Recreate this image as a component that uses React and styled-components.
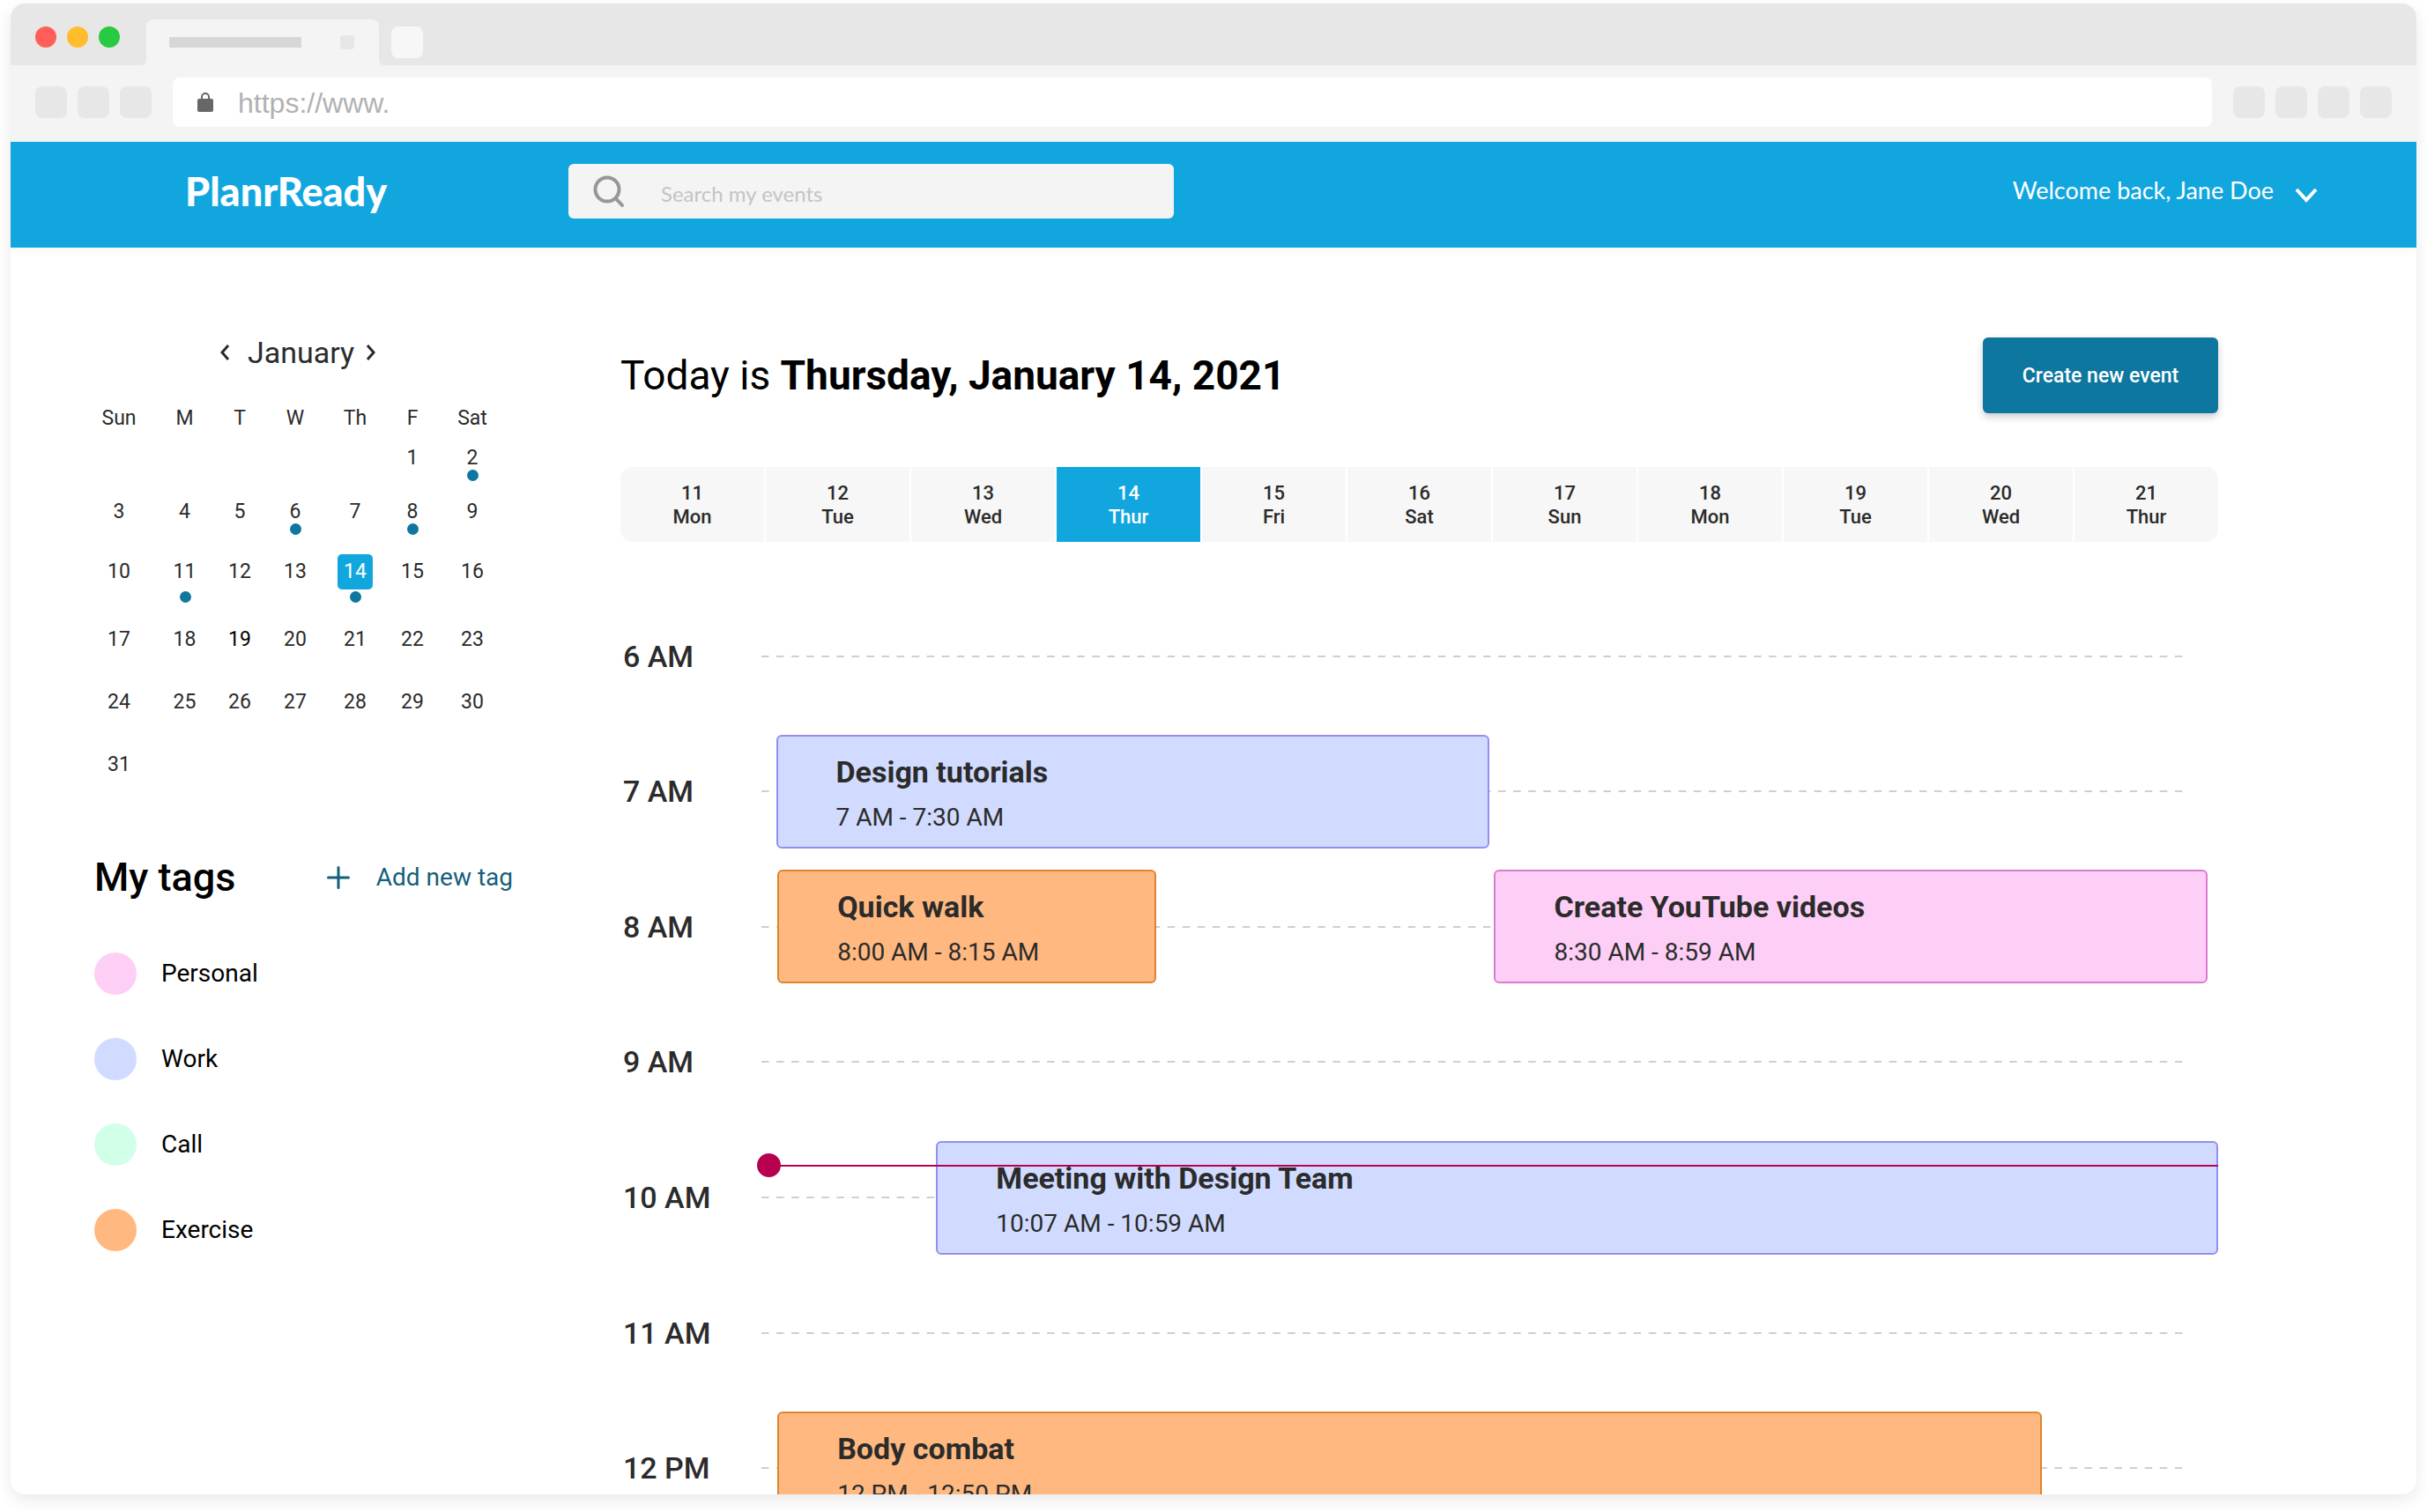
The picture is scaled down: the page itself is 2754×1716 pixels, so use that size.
import React from "react";
import styled, { createGlobalStyle } from "styled-components";

const colors = {
  brand: "#12a6df",
  brandDark: "#0e779f",
  link: "#155f7b",
  text: "#2b2b2b",
  now: "#b80050",
};

const tagColors = {
  personal: { fill: "#fecff6", edge: "#dc7bce" },
  work: { fill: "#d1dbff", edge: "#928ff2" },
  call: { fill: "#d1ffe8", edge: "#6fd6a3" },
  exercise: { fill: "#ffb980", edge: "#e0832f" },
};

const GlobalStyle = createGlobalStyle`
  *, *::before, *::after { box-sizing: border-box; }
  body { margin: 0; background: #fff; font-family: Roboto, "Liberation Sans", sans-serif; color: ${colors.text}; }
  button, input { font: inherit; color: inherit; }
  button { border: 0; padding: 0; background: none; cursor: pointer; }
  h1, h2, h3, p, ul { margin: 0; padding: 0; }
`;

const Window = styled.div`
  display: flex;
  flex-direction: column;
  height: calc(100vh - 24px);
  margin: 4px 12px 20px;
  border-radius: 16px;
  overflow: hidden;
  background: #fff;
  box-shadow: 0 6px 18px rgba(0, 0, 0, 0.09);
`;

const TitleBar = styled.div`
  flex: none;
  display: flex;
  align-items: flex-end;
  height: 70px;
  padding-left: 28px;
  background: #e7e7e7;
`;

const Lights = styled.div`
  display: flex;
  gap: 12px;
  padding-bottom: 20px;
  margin-right: 30px;
`;

const Light = styled.span`
  width: 24px;
  height: 24px;
  border-radius: 50%;
  background: ${(p) => p.$color};
`;

const Tab = styled.div`
  position: relative;
  display: flex;
  align-items: center;
  justify-content: space-between;
  width: 264px;
  height: 52px;
  padding: 0 28px 0 26px;
  border-radius: 8px 8px 0 0;
  background: #f4f4f4;

  &::before,
  &::after {
    content: "";
    position: absolute;
    bottom: 0;
    width: 6px;
    height: 6px;
  }
  &::before {
    left: -6px;
    background: radial-gradient(circle at 0 0, #e7e7e7 6px, #f4f4f4 6px);
  }
  &::after {
    right: -6px;
    background: radial-gradient(circle at 100% 0, #e7e7e7 6px, #f4f4f4 6px);
  }
`;

const TabTitle = styled.span`
  width: 150px;
  height: 12px;
  background: #d7d7d7;
`;

const TabClose = styled.span`
  width: 16px;
  height: 16px;
  border-radius: 4px;
  background: #e7e7e7;
`;

const Chip = styled.span`
  flex: none;
  width: 36px;
  height: 36px;
  border-radius: 8px;
  background: ${(p) => p.$color || "#e7e7e7"};
`;

const NewTab = styled.div`
  display: flex;
  padding: 0 0 8px 14px;
`;

const Toolbar = styled.div`
  flex: none;
  display: flex;
  align-items: center;
  gap: 24px;
  padding: 14px 28px 17px;
  background: #f4f4f4;
`;

const ChipGroup = styled.div`
  display: flex;
  gap: 12px;
`;

const Address = styled.label`
  flex: 1;
  display: flex;
  align-items: center;
  gap: 28px;
  height: 56px;
  padding: 0 28px;
  border-radius: 8px;
  background: #fff;
`;

const AddressInput = styled.input`
  flex: 1;
  min-width: 0;
  border: 0;
  padding: 2px 0 0;
  outline: 0;
  background: none;
  font-family: "Liberation Sans", Arial, sans-serif;
  font-size: 32px;
  line-height: 40px;
  color: #b1b1b1;
`;

const Header = styled.header`
  flex: none;
  display: flex;
  align-items: center;
  height: 120px;
  padding: 0 112px 0 198px;
  background: ${colors.brand};
  box-shadow: 0 4px 12px rgba(0, 0, 0, 0.03);
  color: #fff;
  font-family: Lato, sans-serif;
`;

const Logo = styled.a`
  width: 435px;
  padding-bottom: 8px;
  font-size: 45px;
  line-height: 56px;
  font-weight: 900;
  color: inherit;
  text-decoration: none;
`;

const Search = styled.label`
  display: flex;
  align-items: center;
  gap: 40px;
  width: 687px;
  height: 62px;
  margin-bottom: 8px;
  padding: 0 28px;
  border-radius: 6px;
  background: #f4f4f4;
`;

const SearchInput = styled.input`
  flex: 1;
  min-width: 0;
  border: 0;
  padding: 6px 0 0;
  outline: 0;
  background: none;
  font-size: 24px;
  line-height: 28px;

  &::placeholder {
    color: #c4c4c4;
    opacity: 1;
  }
`;

const Account = styled.button`
  display: flex;
  align-items: center;
  gap: 24px;
  margin-left: auto;
  font-size: 27px;
  line-height: 32px;
  padding-bottom: 10px;

  svg {
    margin-top: 10px;
  }
`;

const Page = styled.div`
  flex: 1;
  min-height: 0;
  display: flex;
  gap: 122px;
  padding: 0 225px 0 95px;
  overflow: hidden;
`;

const Sidebar = styled.aside`
  flex: none;
  width: 475px;
  padding-top: 99px;
`;

const MonthNav = styled.div`
  display: flex;
  align-items: center;
  gap: 12px;
  height: 40px;
  margin-bottom: 35px;
  padding-left: 141px;
`;

const MonthName = styled.h2`
  padding-left: 7px;
  font-size: 34px;
  line-height: 40px;
  font-weight: 400;
`;

const MonthButton = styled.button`
  display: flex;
  align-items: center;
  width: 14px;
  height: 40px;
`;

const MonthTable = styled.table`
  table-layout: fixed;
  width: 477px;
  margin-left: -12px;
  border-collapse: collapse;
  font-size: 23px;
  line-height: 40px;
  text-align: center;

  th,
  td {
    padding: 0;
    font-weight: 400;
    vertical-align: top;
    white-space: nowrap;
  }
`;

const WeekRow = styled.tr`
  height: ${(p) => p.$height}px;
`;

const DayButton = styled.button`
  position: relative;
  display: block;
  width: 40px;
  height: 40px;
  margin: 0 auto;
  border-radius: 5px;
  background: ${(p) => (p.$today ? colors.brand : "none")};
  color: ${(p) => (p.$today ? "#fff" : p.$strong ? "#000" : "inherit")};

  &::after {
    content: "";
    display: ${(p) => (p.$dot ? "block" : "none")};
    position: absolute;
    left: 14px;
    top: ${(p) => p.$dot}px;
    width: 13px;
    height: 13px;
    border-radius: 50%;
    background: ${colors.brandDark};
  }
`;

const TagsHead = styled.div`
  display: flex;
  align-items: center;
  justify-content: space-between;
  margin: 86px 0 63px;
`;

const TagsTitle = styled.h2`
  font-size: 45px;
  line-height: 44px;
  font-weight: 500;
  color: #000;
`;

const AddTag = styled.button`
  display: flex;
  align-items: center;
  gap: 30px;
  font-size: 28px;
  line-height: 32px;
  color: ${colors.link};
`;

const TagList = styled.ul`
  display: flex;
  flex-direction: column;
  gap: 49px;
  list-style: none;
`;

const TagItem = styled.li`
  display: flex;
  align-items: center;
  gap: 28px;
  font-size: 28px;
  line-height: 48px;
  color: #000;

  &::before {
    content: "";
    width: 48px;
    height: 48px;
    border-radius: 50%;
    background: ${(p) => p.$color};
  }
`;

const Content = styled.main`
  flex: 1;
  min-width: 0;
  padding-top: 102px;
`;

const ContentHead = styled.div`
  display: flex;
  align-items: center;
  justify-content: space-between;
  margin-bottom: 61px;
`;

const Today = styled.h1`
  font-size: 46px;
  line-height: 56px;
  font-weight: 400;
  color: #000;
`;

const CreateButton = styled.button`
  width: 267px;
  height: 86px;
  padding-top: 2px;
  border-radius: 6px;
  background: ${colors.brandDark};
  box-shadow: 0 4px 8px rgba(0, 0, 0, 0.2);
  color: #fff;
  font-size: 23px;
  line-height: 28px;
  font-weight: 500;
`;

const DayStrip = styled.div`
  display: grid;
  grid-template-columns: repeat(11, 1fr);
  gap: 2px;
  border-radius: 14px;
  overflow: hidden;
`;

const StripDay = styled.button`
  display: flex;
  flex-direction: column;
  align-items: center;
  justify-content: center;
  height: 85px;
  background: ${(p) => (p.$active ? colors.brand : "#f7f7f7")};
  color: ${(p) => (p.$active ? "#fff" : colors.text)};
  font-size: 22px;
  line-height: 27px;
  font-weight: 500;
`;

const Timeline = styled.div`
  position: relative;
  display: grid;
  grid-auto-rows: 1fr;
  height: 1075px;
  margin-top: 53px;
`;

const HourRow = styled.section`
  display: flex;
  align-items: center;
`;

const HourLabel = styled.h3`
  flex: none;
  width: 160px;
  padding-left: 3px;
  font-size: 34px;
  line-height: 40px;
  font-weight: 500;
`;

const Track = styled.div`
  flex: 1;
  display: grid;
  align-items: center;

  > * {
    grid-area: 1 / 1;
  }
`;

const HourLine = styled.div`
  height: 2px;
  margin-right: 32px;
  background: linear-gradient(90deg, #cfcfcf 9px, transparent 9px) 0 0 / 17px 2px round;
`;

const EventCard = styled.article`
  height: 129px;
  margin-left: ${(p) => p.$start / 10}%;
  width: ${(p) => p.$span / 10}%;
  padding: 20px 66px;
  border: 2px solid ${(p) => tagColors[p.$tag].edge};
  border-radius: 6px;
  background: ${(p) => tagColors[p.$tag].fill};
`;

const EventTitle = styled.h3`
  margin-bottom: 12px;
  font-size: 34px;
  line-height: 40px;
  font-weight: 700;
  white-space: nowrap;
`;

const EventTime = styled.p`
  font-size: 28px;
  line-height: 40px;
`;

const NowMarker = styled.div`
  position: absolute;
  top: 641px;
  left: 155px;
  right: 0;
  display: flex;
  align-items: center;
  pointer-events: none;

  &::before {
    content: "";
    width: 27px;
    height: 27px;
    border-radius: 50%;
    background: ${colors.now};
  }
  &::after {
    content: "";
    flex: 1;
    height: 2px;
    background: ${colors.now};
  }
`;

const weeks = [
  { height: 61, dot: 33, days: [null, null, null, null, null, 1, 2] },
  { height: 68, dot: 33, days: [3, 4, 5, 6, 7, 8, 9] },
  { height: 77, dot: 42, days: [10, 11, 12, 13, 14, 15, 16] },
  { height: 71, dot: 33, days: [17, 18, 19, 20, 21, 22, 23] },
  { height: 71, dot: 33, days: [24, 25, 26, 27, 28, 29, 30] },
  { height: 40, dot: 33, days: [31, null, null, null, null, null, null] },
];
const busyDays = [2, 6, 8, 11, 14];
const weekdayColumns = [
  ["Sun", 80],
  ["M", 69],
  ["T", 56],
  ["W", 70],
  ["Th", 66],
  ["F", 64],
  ["Sat", 72],
];

const stripDays = [
  [11, "Mon"],
  [12, "Tue"],
  [13, "Wed"],
  [14, "Thur"],
  [15, "Fri"],
  [16, "Sat"],
  [17, "Sun"],
  [18, "Mon"],
  [19, "Tue"],
  [20, "Wed"],
  [21, "Thur"],
];

const tags = [
  ["Personal", "personal"],
  ["Work", "work"],
  ["Call", "call"],
  ["Exercise", "exercise"],
];

// start and span are thousandths of the track's width
const hours = [
  { label: "6 AM", events: [] },
  { label: "7 AM", events: [{ title: "Design tutorials", time: "7 AM - 7:30 AM", tag: "work", start: 10, span: 490 }] },
  {
    label: "8 AM",
    events: [
      { title: "Quick walk", time: "8:00 AM - 8:15 AM", tag: "exercise", start: 11, span: 260 },
      { title: "Create YouTube videos", time: "8:30 AM - 8:59 AM", tag: "personal", start: 503, span: 490 },
    ],
  },
  { label: "9 AM", events: [] },
  {
    label: "10 AM",
    events: [{ title: "Meeting with Design Team", time: "10:07 AM - 10:59 AM", tag: "work", start: 120, span: 880 }],
  },
  { label: "11 AM", events: [] },
  { label: "12 PM", events: [{ title: "Body combat", time: "12 PM - 12:50 PM", tag: "exercise", start: 11, span: 868 }] },
];

const Chevron = ({ width, height, points, stroke }) => (
  <svg width={width} height={height} viewBox={`0 0 ${width} ${height}`} fill="none" aria-hidden="true">
    <polyline points={points} stroke="currentColor" strokeWidth={stroke} />
  </svg>
);

const LockIcon = () => (
  <svg width="18" height="22" viewBox="0 0 18 22" aria-hidden="true">
    <rect x="0" y="7" width="18" height="15" rx="2" fill="#676767" />
    <path d="M5 8V5a4 4 0 0 1 8 0v3" fill="none" stroke="#676767" strokeWidth="2" />
  </svg>
);

const SearchIcon = () => (
  <svg width="37" height="37" viewBox="0 0 37 37" fill="none" stroke="#979797" strokeWidth="4" aria-hidden="true">
    <circle cx="16" cy="16" r="13.5" />
    <path d="M25.5 26 33 34" strokeLinecap="round" />
  </svg>
);

const PlusIcon = () => (
  <svg width="26" height="26" viewBox="0 0 26 26" stroke="currentColor" strokeWidth="3" strokeLinecap="round" aria-hidden="true">
    <path d="M13 1.5v23M1.5 13h23" />
  </svg>
);

export default function App() {
  return (
    <>
      <GlobalStyle />
      <Window>
        <TitleBar>
          <Lights>
            <Light $color="#ff5f58" />
            <Light $color="#ffbd2e" />
            <Light $color="#28ca42" />
          </Lights>
          <Tab>
            <TabTitle />
            <TabClose />
          </Tab>
          <NewTab>
            <Chip $color="#f7f7f7" />
          </NewTab>
        </TitleBar>
        <Toolbar>
          <ChipGroup>
            <Chip />
            <Chip />
            <Chip />
          </ChipGroup>
          <Address>
            <LockIcon />
            <AddressInput aria-label="Address" defaultValue="https://www." />
          </Address>
          <ChipGroup>
            <Chip />
            <Chip />
            <Chip />
            <Chip />
          </ChipGroup>
        </Toolbar>

        <Header>
          <Logo href="#">PlanrReady</Logo>
          <Search>
            <SearchIcon />
            <SearchInput type="search" aria-label="Search my events" placeholder="Search my events" />
          </Search>
          <Account>
            Welcome back, Jane Doe
            <Chevron width={26} height={17} points="2,2 13,14 24,2" stroke={4} />
          </Account>
        </Header>

        <Page>
          <Sidebar>
            <MonthNav>
              <MonthButton aria-label="Previous month">
                <Chevron width={14} height={20} points="11,2 4,10 11,18" stroke={3} />
              </MonthButton>
              <MonthName>January</MonthName>
              <MonthButton aria-label="Next month">
                <Chevron width={14} height={20} points="3,2 10,10 3,18" stroke={3} />
              </MonthButton>
            </MonthNav>
            <MonthTable>
              <colgroup>
                {weekdayColumns.map(([name, width]) => (
                  <col key={name} width={width} />
                ))}
              </colgroup>
              <thead>
                <WeekRow $height={45}>
                  {weekdayColumns.map(([name]) => (
                    <th key={name} scope="col">
                      {name}
                    </th>
                  ))}
                </WeekRow>
              </thead>
              <tbody>
                {weeks.map((week, w) => (
                  <WeekRow key={w} $height={week.height}>
                    {week.days.map((day, d) => (
                      <td key={d}>
                        {day && (
                          <DayButton
                            $today={day === 14}
                            $strong={day === 19}
                            $dot={busyDays.includes(day) ? week.dot : 0}
                          >
                            {day}
                          </DayButton>
                        )}
                      </td>
                    ))}
                  </WeekRow>
                ))}
              </tbody>
            </MonthTable>

            <TagsHead>
              <TagsTitle>My tags</TagsTitle>
              <AddTag>
                <PlusIcon />
                Add new tag
              </AddTag>
            </TagsHead>
            <TagList>
              {tags.map(([name, tag]) => (
                <TagItem key={tag} $color={tagColors[tag].fill}>
                  {name}
                </TagItem>
              ))}
            </TagList>
          </Sidebar>

          <Content>
            <ContentHead>
              <Today>
                Today is <strong>Thursday, January 14, 2021</strong>
              </Today>
              <CreateButton>Create new event</CreateButton>
            </ContentHead>
            <DayStrip>
              {stripDays.map(([date, name]) => (
                <StripDay key={date} $active={date === 14}>
                  <span>{date}</span>
                  <span>{name}</span>
                </StripDay>
              ))}
            </DayStrip>
            <Timeline>
              {hours.map((hour) => (
                <HourRow key={hour.label}>
                  <HourLabel>{hour.label}</HourLabel>
                  <Track>
                    <HourLine />
                    {hour.events.map((event) => (
                      <EventCard key={event.title} $tag={event.tag} $start={event.start} $span={event.span}>
                        <EventTitle>{event.title}</EventTitle>
                        <EventTime>{event.time}</EventTime>
                      </EventCard>
                    ))}
                  </Track>
                </HourRow>
              ))}
              <NowMarker />
            </Timeline>
          </Content>
        </Page>
      </Window>
    </>
  );
}
